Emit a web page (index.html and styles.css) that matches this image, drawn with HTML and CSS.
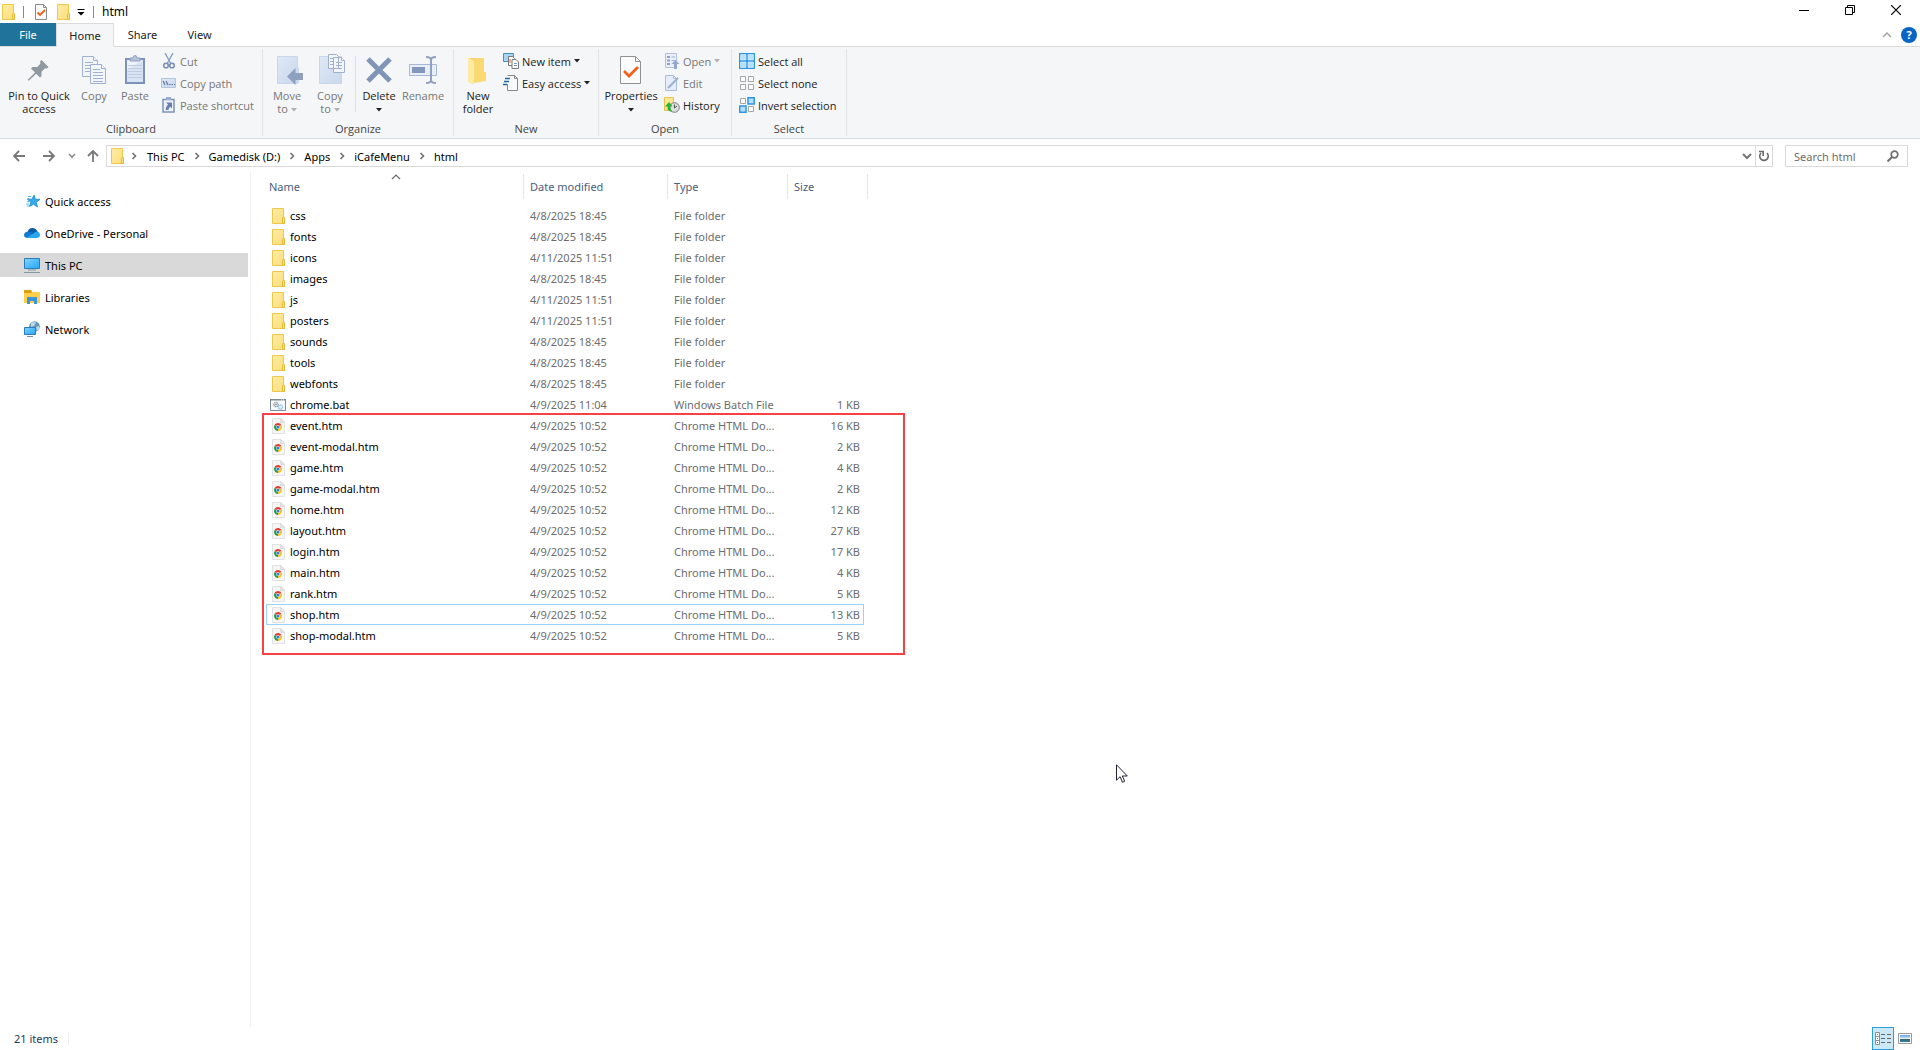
FILE: index.html
```html
<!DOCTYPE html>
<html lang="en">
<head>
<meta charset="utf-8">
<meta name="viewport" content="width=device-width, initial-scale=1">
<title>html</title>
<link rel="stylesheet" href="styles.css">
</head>
<body>
<svg class="sprite" aria-hidden="true">
  <defs>
    <linearGradient id="fold" x1="0" y1="0" x2="1" y2="1"><stop offset="0" stop-color="#ffeda6"/><stop offset="1" stop-color="#fbdc78"/></linearGradient>
    <linearGradient id="screen" x1="0" y1="0" x2="1" y2="1"><stop offset="0" stop-color="#8ad2ff"/><stop offset=".5" stop-color="#4fbcfd"/><stop offset="1" stop-color="#2aa5f4"/></linearGradient>
    <linearGradient id="pale" x1="0" y1="0" x2="1" y2="1"><stop offset="0" stop-color="#dfe8f6"/><stop offset="1" stop-color="#c9d8ec"/></linearGradient>
    <linearGradient id="sky" x1="0" y1="0" x2="0" y2="1"><stop offset="0" stop-color="#5b9cf8"/><stop offset=".5" stop-color="#dcebf5"/><stop offset=".6" stop-color="#3d6b58"/><stop offset="1" stop-color="#2f7ab8"/></linearGradient>
    <symbol id="folder" viewBox="0 0 16 16"><path d="M1.500.5h11v9h1v6h-12z" fill="url(#fold)" stroke="#eec849"/><path d="M11.500 15V10.500q0-1 1-1t1 1V15.500h-2z" fill="#fbe08a" stroke="#e3b93a"/></symbol>
    <symbol id="checkdoc" viewBox="0 0 16 16"><path d="M1.500.5h8l3 3v12h-11z" fill="#fafafa" stroke="#8b8b8b"/><path d="M9.500.5v3h3" fill="none" stroke="#8b8b8b"/><path d="M3.500 8.500l2.500 2.500 5-5" fill="none" stroke="#f0601c" stroke-width="1.800"/></symbol>
    <symbol id="chrome" viewBox="0 0 16 16"><path d="M1.500.5h8.500l3.500 3.500v11.500h-12z" fill="#f6f6f6" stroke="#e2e2e2"/><path d="M9.500.5v4h4z" fill="#e4e4e4" stroke="#d4d4d4" stroke-width=".6"/><path d="M7 9L3.540 7A4 4 0 0 1 10.460 7z" fill="#e33b2e"/><path d="M7 9L10.460 7A4 4 0 0 1 7 13z" fill="#fcc31e"/><path d="M7 9L7 13A4 4 0 0 1 3.540 7z" fill="#229a4b"/><circle cx="7" cy="9" r="1.900" fill="#fff"/><circle cx="7" cy="9" r="1.500" fill="#3277e6"/></symbol>
    <symbol id="bat" viewBox="0 0 16 16"><path d="M.5 2.500h15v11H.5z" fill="#f7f9fa" stroke="#7e8a93"/><path d="M0 2h16v1.500H0z" fill="#7e8a93"/><path d="M11 3h1m1 0h1" stroke="#fff"/><circle cx="6" cy="7.500" r="2.200" fill="#dce3e7" stroke="#8d979e" stroke-width="1.300" stroke-dasharray="1 .5"/><circle cx="10.500" cy="10" r="2.200" fill="#d6ecfa" stroke="#8fbbd8" stroke-width="1.200" stroke-dasharray="1 .5"/><circle cx="6" cy="7.500" r=".7" fill="#788"/></symbol>
    <symbol id="next" viewBox="0 0 16 16"><path d="M6.500 5l3 3-3 3" fill="none" stroke="#6d6d6d" stroke-width="1.500"/></symbol>
    <symbol id="caret" viewBox="0 0 6 4"><path d="M0 0h6L3 3.500z" fill="currentColor"/></symbol>
  </defs>
</svg>

<header class="titlebar">
  <svg class="i16"><use href="#folder"/></svg>
  <span class="bar-sep"></span>
  <button class="plain" aria-label="Properties"><svg class="i16"><use href="#checkdoc"/></svg></button>
  <button class="plain quick-new" aria-label="New folder"><svg class="i16"><use href="#folder"/></svg></button>
  <button class="plain customize" aria-label="Customize toolbar"><svg width="8" height="8" viewBox="0 0 8 8"><path d="M.500 1.500h7" stroke="#000"/><path d="M.500 4h7L4 7.500z" fill="#000"/></svg></button>
  <span class="bar-sep"></span>
  <h1 class="title">html</h1>
  <div class="window-controls">
    <button class="plain" aria-label="Minimize"><svg width="10" height="10"><path d="M0 5.500h10" stroke="#000"/></svg></button>
    <button class="plain" aria-label="Restore"><svg width="10" height="10"><path d="M.5 2.500h7v7h-7zM2.500 2V.5h7v7H8" fill="none" stroke="#000"/></svg></button>
    <button class="plain" aria-label="Close"><svg width="10" height="10"><path d="M0 0l10 10M10 0L0 10" stroke="#000" stroke-width="1.200"/></svg></button>
  </div>
</header>

<nav class="tabs">
  <button class="plain tab tab-file">File</button>
  <button class="plain tab tab-active">Home</button>
  <button class="plain tab">Share</button>
  <button class="plain tab">View</button>
  <div class="tab-tools">
    <button class="plain" aria-label="Collapse ribbon"><svg width="10" height="6"><path d="M1 5l4-4 4 4" fill="none" stroke="#a3a3a3" stroke-width="1.400"/></svg></button>
    <button class="plain help" aria-label="Help">?</button>
  </div>
</nav>

<section class="ribbon">
  <div class="group">
    <div class="tools">
      <button class="plain big w72"><svg class="i32" viewBox="0 0 32 32"><g transform="translate(5 6)" fill="#8f999f"><path d="M13.500 0l7 7-1.500 1.500-2-.3-3.500 3.600 0 4.200-1.500 1.500-3.800-3.800L1 20.500 0 20.500 0 19.500l7-7L3 8.500 4.500 7l4.700 0L12.500 3.500 12 1.500z"/></g></svg><span>Pin to Quick<br>access</span></button>
      <button class="plain big off w38"><svg class="i32" viewBox="0 0 32 32"><g fill="#f2f6fb" stroke="#a0b1cf"><path d="M4.500 2.500h11l4 4v16h-15z"/><path d="M15.500 2.500v4h4M7 8.500h8M7 11.500h5M7 14.500h5M7 17.500h5"/><path d="M12.500 10.500h11l4 4v15h-15z"/><path d="M23.500 10.500v4h4M15 15.500h7M15 18.500h10M15 21.500h10M15 24.500h10M15 27.500h10"/></g></svg><span>Copy</span></button>
      <button class="plain big off w44"><svg class="i32" viewBox="0 0 32 32"><path d="M7 5h18v24H7z" fill="#eef3fb" stroke="#7d92bb" stroke-width="2"/><path d="M8 28V16L24 6v22z" fill="#d8e3f4"/><path d="M9 11.500h14M9 14.500h14M9 17.500h14M9 20.500h14M9 23.500h14" stroke="#bfcce2"/><path d="M11 7V4h3q0-2.500 2-2.500T18 4h3v3z" fill="#b7c3d8" stroke="#8da0c2"/></svg><span>Paste</span></button>
      <div class="stack">
        <button class="plain small off"><svg class="i16" viewBox="0 0 16 16"><path d="M4 0l6 11M12 0L6 11" stroke="#8ea3c4" stroke-width="1.500"/><circle cx="5" cy="12.500" r="2.300" fill="none" stroke="#7990b8" stroke-width="1.600"/><circle cx="11" cy="12.500" r="2.300" fill="none" stroke="#7990b8" stroke-width="1.600"/></svg>Cut</button>
        <button class="plain small off"><svg class="i16" viewBox="0 0 16 16"><path d="M.5 3.500h14v9H.5z" fill="url(#pale)" stroke="#b5c5de"/><path d="M2 6l2 4M5 6l2 4M8 9.500h1.500M10.500 9.500H12M13 9.500h1" stroke="#5d759f" stroke-width="1.200"/></svg>Copy path</button>
        <button class="plain small off"><svg class="i16" viewBox="0 0 16 16"><path d="M2 2.500h11v12.500H2z" fill="#eef3fb" stroke="#7d92bb" stroke-width="1.500"/><path d="M5 0h5v3H5z" fill="#9badcb"/><path d="M5 5.500h6v6L9.200 9.700Q7.500 11 7.500 13H4.500Q4.500 10 7 7.500z" fill="#6980ab"/></svg>Paste shortcut</button>
      </div>
    </div>
    <h2 class="group-name">Clipboard</h2>
  </div>

  <div class="group">
    <div class="tools">
      <button class="plain big off w42"><svg class="i32" viewBox="0 0 32 32"><path d="M6.500 2.500h20v27h-20z" fill="url(#pale)" stroke="#c9d7eb"/><path d="M26 18v-6l2 2v15H23" fill="#c9d8ec"/><path d="M16 22.500L24.500 14v5H32v7h-7.500v5z" fill="#8e9fc0"/></svg><span>Move<br>to <svg class="caret"><use href="#caret"/></svg></span></button>
      <button class="plain big off w44"><svg class="i32" viewBox="0 0 32 32"><path d="M5.500 2.500h22v27h-22z" fill="url(#pale)" stroke="#c9d7eb"/><g fill="#f2f6fb" stroke="#a0b1cf"><path d="M14.500.5h8l2 2v12h-10zM19.500 3.500h8l3 3v12h-11z"/><path d="M16 4.500h3M16 7.500h3M16 10.500h3M22 8.500h6M22 11.500h6M22 14.500h6M27.500 3.500v3h3"/></g></svg><span>Copy<br>to <svg class="caret"><use href="#caret"/></svg></span></button>
      <span class="tool-sep"></span>
      <button class="plain big w42"><svg class="i32" viewBox="0 0 32 32"><path d="M5 5l22 22M27 5L5 27" stroke="#8094b8" stroke-width="5"/></svg><span>Delete<br><svg class="caret"><use href="#caret"/></svg></span></button>
      <button class="plain big off w46"><svg class="i32" viewBox="0 0 32 32"><path d="M2.500 10.500h27v11h-27z" fill="#e7eef8" stroke="#a9b9d5"/><path d="M5 13h13v6H5z" fill="#8397bd"/><path d="M19 3q5 0 5 3v20q0 3-5 3M29 3q-5 0-5 3v20q0 3 5 3" fill="none" stroke="#8fa1c2" stroke-width="2"/></svg><span>Rename</span></button>
    </div>
    <h2 class="group-name">Organize</h2>
  </div>

  <div class="group">
    <div class="tools">
      <button class="plain big w42"><svg class="i32" viewBox="0 0 32 32"><path d="M6 4h16v14h2v9H9z" fill="#f9d775"/><path d="M6 4l6 3v24l-6-3z" fill="#ffeaa2"/><path d="M12 29V8l10-4v14h2v9z" fill="#fbd972"/></svg><span>New<br>folder</span></button>
      <div class="stack">
        <button class="plain small"><svg class="i16" viewBox="0 0 16 16"><path d="M.5.5h10v8H.5z" fill="#a7d5f2" stroke="#4a8fb9"/><path d="M5.500 3.500h4l2 2v7h-6z" fill="#fff" stroke="#777"/><path d="M9 6.500h4l2.500 2.500v6.500H9z" fill="#fff" stroke="#777"/><path d="M11 10.500h3M11 12.500h3" stroke="#7993bd"/><path d="M7 6v4" stroke="#cf6c3e"/></svg>New item <svg class="caret"><use href="#caret"/></svg></button>
        <button class="plain small"><svg class="i16" viewBox="0 0 16 16"><path d="M4.500.5h7l3 3v12h-10V9" fill="#fafafa" stroke="#888"/><path d="M11.500.5v3h3" fill="none" stroke="#888"/><path d="M2 3.500h5M1 6.500h5M0 9.500h4" stroke="#1c66a5" stroke-width="1.300"/></svg>Easy access <svg class="caret"><use href="#caret"/></svg></button>
      </div>
    </div>
    <h2 class="group-name">New</h2>
  </div>

  <div class="group">
    <div class="tools">
      <button class="plain big w58"><svg class="i32" viewBox="0 0 32 32"><path d="M5.500 2.500h15l5 5v22h-20z" fill="#fbfbfb" stroke="#929292"/><path d="M20.500 2.500v5h5" fill="none" stroke="#929292"/><path d="M9 17l5 5 9-9" fill="none" stroke="#f4601a" stroke-width="2.800"/></svg><span>Properties<br><svg class="caret"><use href="#caret"/></svg></span></button>
      <div class="stack">
        <button class="plain small off"><svg class="i16" viewBox="0 0 16 16"><path d="M1.500.5h11v14h-11z" fill="#e9f0fa" stroke="#b0c0dc"/><path d="M3 3h3v2H3zM3 6.500h3v2H3zM3 10h3v2H3z" fill="#8ba1c9"/><path d="M7.500 4H11M7.500 7.500H11" stroke="#9fb1d2"/><path d="M11.500 7l4 4h-2.500v5h-3v-5H7.500z" fill="#95a7cb"/></svg>Open <svg class="caret"><use href="#caret"/></svg></button>
        <button class="plain small off"><svg class="i16" viewBox="0 0 16 16"><path d="M1.500.5h8l3 3v12h-11z" fill="#e4edf9" stroke="#aabddb"/><path d="M9.500.5v3h3" fill="none" stroke="#aabddb"/><path d="M4 13L14 3" stroke="#9bb0d3" stroke-width="2"/></svg>Edit</button>
        <button class="plain small"><svg class="i16" viewBox="0 0 16 16"><path d="M.5.5h9v13h-9z" fill="url(#fold)" stroke="#eac34c"/><circle cx="10.500" cy="10.500" r="4.800" fill="#dedede" stroke="#7a7a7a"/><path d="M10.500 11V7.500M10.500 11l2.500-2" stroke="#555"/><path d="M8 15Q3 14 3.500 9.500H1L5 5l3.500 4.500H6.500Q6 12.500 8 15z" fill="#2bb13c"/></svg>History</button>
      </div>
    </div>
    <h2 class="group-name">Open</h2>
  </div>

  <div class="group">
    <div class="tools">
      <div class="stack">
        <button class="plain small"><svg class="i16" viewBox="0 0 16 16"><path d="M0 0h16v16H0z" fill="#2d95e8"/><path d="M1.500 1.500h5.500v5.500H1.500zM9 1.500h5.500v5.500H9zM1.500 9h5.500v5.500H1.500zM9 9h5.500v5.500H9z" fill="#b6e0fc" stroke="#e5f4fe" stroke-width=".6"/></svg>Select all</button>
        <button class="plain small"><svg class="i16" viewBox="0 0 16 16"><path d="M1.500 1.500h5v5h-5zM9.500 1.500h5v5h-5zM1.500 9.500h5v5h-5zM9.500 9.500h5v5h-5z" fill="#fff" stroke="#a5a5a5"/></svg>Select none</button>
        <button class="plain small"><svg class="i16" viewBox="0 0 16 16"><path d="M1.500 1.500h5v5h-5zM9.500 9.500h5v5h-5z" fill="#fff" stroke="#a5a5a5"/><path d="M9 .800h6.200V7H9zM.800 9H7v6.200H.800z" fill="#b6e0fc" stroke="#2d95e8" stroke-width="1.500"/></svg>Invert selection</button>
      </div>
    </div>
    <h2 class="group-name">Select</h2>
  </div>
</section>

<div class="navbar">
  <div class="arrows">
    <button class="plain" aria-label="Back"><svg width="14" height="12"><path d="M13 6H2M7 1L2 6l5 5" fill="none" stroke="#787878" stroke-width="1.800"/></svg></button>
    <button class="plain" aria-label="Forward"><svg width="14" height="12"><path d="M1 6h11M7 1l5 5-5 5" fill="none" stroke="#787878" stroke-width="1.800"/></svg></button>
    <button class="plain recent" aria-label="Recent locations"><svg width="8" height="6"><path d="M1 1l3 3 3-3" fill="none" stroke="#8a8a8a" stroke-width="1.600"/></svg></button>
    <button class="plain" aria-label="Up"><svg width="12" height="14"><path d="M6 13V2M1 7l5-5 5 5" fill="none" stroke="#787878" stroke-width="1.800"/></svg></button>
  </div>
  <div class="address">
    <svg class="i16"><use href="#folder"/></svg>
    <svg class="crumb-sep"><use href="#next"/></svg><a href="#">This PC</a>
    <svg class="crumb-sep"><use href="#next"/></svg><a href="#">Gamedisk (D:)</a>
    <svg class="crumb-sep"><use href="#next"/></svg><a href="#">Apps</a>
    <svg class="crumb-sep"><use href="#next"/></svg><a href="#">iCafeMenu</a>
    <svg class="crumb-sep"><use href="#next"/></svg><a href="#">html</a>
    <button class="plain history" aria-label="Previous locations"><svg width="10" height="8"><path d="M1 2l4 4 4-4" fill="none" stroke="#777" stroke-width="2"/></svg></button>
    <button class="plain refresh" aria-label="Refresh"><svg width="12" height="12" viewBox="0 0 12 12"><path d="M3 3A4.300 4.300 0 1 0 9 3M1 1.500h4.200V6" fill="none" stroke="#6b6b6b" stroke-width="1.600"/></svg></button>
  </div>
  <label class="search">
    <input type="search" placeholder="Search html" aria-label="Search html">
    <svg width="12" height="12"><circle cx="7.500" cy="4.500" r="3.300" fill="none" stroke="#707070" stroke-width="1.700"/><path d="M5 7l-4.500 4.500" stroke="#707070" stroke-width="2"/></svg>
  </label>
</div>

<main class="main">
  <nav class="tree">
    <a href="#"><svg class="i16" viewBox="0 0 16 16"><path d="M10 2l1.300 4.200 4.700.2-3.800 2.800L13.500 14 9.500 11.300 5.500 13.500 6.800 9.300 3.500 6.400l4.500-.2z" fill="#35a9ee" stroke="#1b86cb" stroke-width=".8"/><path d="M4 3.500h3M3.500 5.500h2M3 8.500h2M2 11h3M3 13h2" stroke="#5bb5ea"/></svg>Quick access</a>
    <a href="#"><svg class="i16" viewBox="0 0 16 16"><path d="M3.500 8Q4 3 8.500 3q3.500 0 5 3.500L8 11z" fill="#0a5cab"/><path d="M4 13Q0 13 0 10t4-3.500q3 0 6 3z" fill="#1379d0"/><path d="M3 12.500L10 8q1.500-2 3.500-1.500 2.500.8 2.500 3.500 0 3-3.500 3H4z" fill="#28a6ee"/></svg>OneDrive - Personal</a>
    <a href="#" class="current"><svg class="i16" viewBox="0 0 16 16"><path d="M.5 1.500h15v10H.5z" fill="url(#screen)" stroke="#2a7db5"/><path d="M4 13h8M0 15.500h16" stroke="#7f99ab"/></svg>This PC</a>
    <a href="#"><svg class="i16" viewBox="0 0 16 16"><path d="M0 1h7l1 2h8v11H0z" fill="#ffcf4b"/><path d="M0 1h7l1 2-1 1H0z" fill="#e09c12"/><path d="M3 15V9q0-1 1-1h8q1 0 1 1v6h-3v-3H6v3z" fill="#3a94de"/></svg>Libraries</a>
    <a href="#"><svg class="i16" viewBox="0 0 16 16"><circle cx="10.500" cy="5.500" r="5.300" fill="#6396b8"/><path d="M7 2q3-2 5 0l-2 3-3 1zM12 6l3-1v3l-2 2z" fill="#b9d8ea"/><path d="M.5 6.500h11v7H.5z" fill="url(#screen)" stroke="#2a7db5"/><path d="M3 15.500h6" stroke="#6f8fa5"/></svg>Network</a>
  </nav>

  <section class="files">
    <table>
      <colgroup><col class="c-name"><col class="c-date"><col class="c-type"><col class="c-size"></colgroup>
      <thead><tr>
        <th><span class="sorted">Name<svg width="10" height="6"><path d="M1 5l4-4 4 4" fill="none" stroke="#6a6a6a" stroke-width="1.200"/></svg></span></th>
        <th><span>Date modified</span></th><th><span>Type</span></th><th><span class="last">Size</span></th>
      </tr></thead>
      <tbody>
        <tr><td><svg class="i16"><use href="#folder"/></svg>css</td><td>4/8/2025 18:45</td><td>File folder</td><td></td></tr>
        <tr><td><svg class="i16"><use href="#folder"/></svg>fonts</td><td>4/8/2025 18:45</td><td>File folder</td><td></td></tr>
        <tr><td><svg class="i16"><use href="#folder"/></svg>icons</td><td>4/11/2025 11:51</td><td>File folder</td><td></td></tr>
        <tr><td><svg class="i16"><use href="#folder"/></svg>images</td><td>4/8/2025 18:45</td><td>File folder</td><td></td></tr>
        <tr><td><svg class="i16"><use href="#folder"/></svg>js</td><td>4/11/2025 11:51</td><td>File folder</td><td></td></tr>
        <tr><td><svg class="i16"><use href="#folder"/></svg>posters</td><td>4/11/2025 11:51</td><td>File folder</td><td></td></tr>
        <tr><td><svg class="i16"><use href="#folder"/></svg>sounds</td><td>4/8/2025 18:45</td><td>File folder</td><td></td></tr>
        <tr><td><svg class="i16"><use href="#folder"/></svg>tools</td><td>4/8/2025 18:45</td><td>File folder</td><td></td></tr>
        <tr><td><svg class="i16"><use href="#folder"/></svg>webfonts</td><td>4/8/2025 18:45</td><td>File folder</td><td></td></tr>
        <tr><td class="wide-icon"><svg class="i16"><use href="#bat"/></svg>chrome.bat</td><td>4/9/2025 11:04</td><td>Windows Batch File</td><td>1 KB</td></tr>
        <tr><td><svg class="i16"><use href="#chrome"/></svg>event.htm</td><td>4/9/2025 10:52</td><td>Chrome HTML Do...</td><td>16 KB</td></tr>
        <tr><td><svg class="i16"><use href="#chrome"/></svg>event-modal.htm</td><td>4/9/2025 10:52</td><td>Chrome HTML Do...</td><td>2 KB</td></tr>
        <tr><td><svg class="i16"><use href="#chrome"/></svg>game.htm</td><td>4/9/2025 10:52</td><td>Chrome HTML Do...</td><td>4 KB</td></tr>
        <tr><td><svg class="i16"><use href="#chrome"/></svg>game-modal.htm</td><td>4/9/2025 10:52</td><td>Chrome HTML Do...</td><td>2 KB</td></tr>
        <tr><td><svg class="i16"><use href="#chrome"/></svg>home.htm</td><td>4/9/2025 10:52</td><td>Chrome HTML Do...</td><td>12 KB</td></tr>
        <tr><td><svg class="i16"><use href="#chrome"/></svg>layout.htm</td><td>4/9/2025 10:52</td><td>Chrome HTML Do...</td><td>27 KB</td></tr>
        <tr><td><svg class="i16"><use href="#chrome"/></svg>login.htm</td><td>4/9/2025 10:52</td><td>Chrome HTML Do...</td><td>17 KB</td></tr>
        <tr><td><svg class="i16"><use href="#chrome"/></svg>main.htm</td><td>4/9/2025 10:52</td><td>Chrome HTML Do...</td><td>4 KB</td></tr>
        <tr><td><svg class="i16"><use href="#chrome"/></svg>rank.htm</td><td>4/9/2025 10:52</td><td>Chrome HTML Do...</td><td>5 KB</td></tr>
        <tr class="focused"><td><svg class="i16"><use href="#chrome"/></svg>shop.htm</td><td>4/9/2025 10:52</td><td>Chrome HTML Do...</td><td>13 KB</td></tr>
        <tr><td><svg class="i16"><use href="#chrome"/></svg>shop-modal.htm</td><td>4/9/2025 10:52</td><td>Chrome HTML Do...</td><td>5 KB</td></tr>
      </tbody>
    </table>
    <div class="highlight"></div>
  </section>
</main>

<footer class="status">
  <span class="count">21 items</span>
  <div class="views">
    <button class="plain view-details" aria-label="Details view"><svg width="16" height="13"><path d="M.5.5h4v12h-4zM.5 4.500h4M.5 8.500h4" fill="#fff" stroke="#8c8c8c"/><path d="M6 2.500h4M12 2.500h4M6 6.500h4M12 6.500h4M6 10.500h4M12 10.500h4" stroke="#666"/><path d="M2 2.500h1" stroke="#2a9a4a"/><path d="M2 6.500h1" stroke="#2a6fd0"/><path d="M2 10.500h1" stroke="#d02a2a"/></svg></button>
    <button class="plain" aria-label="Large icons view"><svg width="14" height="11"><path d="M.5.5h13v10H.5z" fill="#fff" stroke="#999"/><path d="M2 2h10v7H2z" fill="url(#sky)"/></svg></button>
  </div>
</footer>

<svg class="pointer" width="12" height="19" viewBox="0 0 12 19" aria-hidden="true"><path d="M.5.800v15.400l3.600-3.500 2.400 5.600 2.200-1-2.400-5.300h5z" fill="#fff" stroke="#223"/></svg>
</body>
</html>
```
FILE: styles.css
```css
* { box-sizing: border-box; }

body {
  margin: 0;
  min-height: 100vh;
  display: flex;
  flex-direction: column;
  background: #fff;
  color: #000;
  font: 11px/13px "Noto Sans", "Open Sans", sans-serif;
}

.sprite { position: absolute; width: 0; height: 0; }
svg { display: block; flex: none; }
.i16 { width: 16px; height: 16px; }
.i32 { width: 32px; height: 32px; }
h1, h2 { margin: 0; font-size: 11px; font-weight: 400; }
a { color: inherit; text-decoration: none; }

.plain {
  flex: none;
  margin: 0;
  padding: 0;
  border: 0;
  background: none;
  color: inherit;
  font: inherit;
  display: flex;
  align-items: center;
  justify-content: center;
}

/* Title bar */
.titlebar {
  height: 23px;
  padding-left: 1px;
  display: flex;
  align-items: center;
}
.bar-sep { width: 1px; height: 12px; margin: 0 10px 0 6px; background: #8a8a8a; }
.quick-new { margin-left: 6px; }
.customize { margin: 0 8px 0 5px; }
.customize + .bar-sep { margin: 0 8px 0 0; }
.title { font-size: 12px; }
.window-controls { margin: 0 1px 3px auto; display: flex; }
.window-controls .plain { width: 46px; height: 18px; }

/* Tabs */
.tabs {
  height: 24px;
  display: flex;
  border-bottom: 1px solid #dadbdc;
}
.tab { width: 57px; height: 23px; color: #222; }
.tab-file { width: 56px; background: #20739b; color: #fff; }
.tab-active {
  width: 58px;
  height: 24px;
  border: 1px solid #dadbdc;
  border-bottom: 0;
  background: #f5f6f7;
}
.tab-tools { margin-left: auto; padding-right: 3px; display: flex; align-items: center; gap: 9px; }
.help { width: 16px; height: 16px; border-radius: 8px; background: #0a64c4; color: #fff; font-weight: 700; }

/* Ribbon */
.ribbon {
  min-height: 92px;
  padding: 2px 0;
  display: flex;
  background: #f5f6f7;
  border-bottom: 1px solid #dadbdc;
  font-family: "Open Sans", "Noto Sans", sans-serif;
}
.group {
  display: flex;
  flex-direction: column;
  border-right: 1px solid #e2e3e4;
  color: #222;
}
.group:nth-child(1) { width: 263px; }
.group:nth-child(2) { width: 191px; }
.group:nth-child(3) { width: 145px; }
.group:nth-child(4) { width: 133px; }
.group:nth-child(5) { width: 115px; }
.tools { height: 73px; padding-left: 3px; display: flex; }
.group-name { text-align: center; color: #444; line-height: 14px; }
.big { flex-direction: column; justify-content: flex-start; gap: 3px; padding-top: 5px; white-space: nowrap; }
.off { color: #767676; }
.w38 { width: 38px; }
.w42 { width: 42px; }
.w44 { width: 44px; }
.w46 { width: 46px; }
.w58 { width: 58px; }
.w72 { width: 72px; }
.caret { display: inline-block; width: 6px; height: 4px; vertical-align: middle; }
.off .caret { color: #b0b0b0; }
.tool-sep { width: 1px; height: 56px; margin: 7px 2px 0 3px; background: #dfe0e2; }
.stack { padding: 1px 0 0 4px; display: flex; flex-direction: column; align-items: flex-start; }
.small { height: 22px; gap: 3px; white-space: nowrap; }

/* Navigation bar */
.navbar {
  padding: 6px 12px 5px 10px;
  display: flex;
  align-items: center;
}
.arrows { width: 96px; display: flex; }
.arrows .plain { width: 18px; height: 22px; margin-right: 12px; }
.arrows .recent { width: 12px; margin: 0 6px 0 -4px; }
.arrows .plain:last-child { margin-right: 0; }
.address {
  flex: 1;
  height: 22px;
  padding-left: 3px;
  display: flex;
  align-items: center;
  border: 1px solid #d9d9d9;
}
.crumb-sep { width: 16px; height: 16px; margin: 0 4px; }
.address .i16 + .crumb-sep { margin: 0 5px 0 0; }
.history { width: 16px; height: 20px; margin-left: auto; }
.refresh { width: 17px; height: 20px; border-left: 1px solid #d9d9d9; }
.search {
  width: 123px;
  height: 22px;
  margin-left: 12px;
  padding: 0 8px;
  display: flex;
  align-items: center;
  border: 1px solid #d9d9d9;
}
.search input {
  flex: 1;
  min-width: 0;
  padding: 0;
  border: 0;
  outline: 0;
  background: none;
  font: inherit;
}
.search input::placeholder { color: #6d6d6d; }

/* Body */
.main { flex: 1; display: flex; }
.tree {
  width: 251px;
  padding: 17px 2px 0 0;
  display: flex;
  flex-direction: column;
  gap: 8px;
  border-right: 1px solid #f0f0f0;
}
.tree a { height: 24px; padding-left: 24px; display: flex; align-items: center; gap: 5px; }
.tree .current { background: #d9d9d9; }

.files { flex: 1; position: relative; padding-left: 15px; }
table { width: 598px; border-collapse: collapse; table-layout: fixed; }
.c-name { width: 258px; }
.c-date { width: 144px; }
.c-type { width: 120px; }
.c-size { width: 76px; }
th { height: 33px; padding: 2px 0 6px; font-weight: 400; text-align: left; vertical-align: top; color: #4c607a; }
th span { display: block; height: 25px; padding-left: 6px; line-height: 25px; border-right: 1px solid #e5e5e5; }
th .sorted { padding-left: 3px; display: grid; grid-template-columns: 1fr auto 1fr; }
th .last { width: 80px; }
td { height: 21px; padding: 0 0 0 6px; color: #6d6d6d; white-space: nowrap; }
td:first-child { display: flex; align-items: center; gap: 3px; padding-left: 5px; color: #000; }
td.wide-icon:first-child { gap: 4px; padding-left: 4px; }
td:last-child { padding-right: 4px; text-align: right; }
.focused { outline: 1px solid #99d1ff; outline-offset: -1px; }

.highlight {
  position: absolute;
  left: 11px;
  top: 241px;
  width: 643px;
  height: 242px;
  border: 2px solid #f94144;
}

/* Status bar */
.status {
  height: 23px;
  padding: 0 8px 0 14px;
  display: flex;
  align-items: center;
  justify-content: space-between;
  color: #1e395b;
}
.count { padding-right: 10px; border-right: 1px solid #eee; }
.views { display: flex; align-items: center; gap: 4px; }
.view-details { width: 22px; height: 23px; border: 1px solid #2a9fdc; background: #cbe8f7; }

.pointer { position: absolute; left: 1116px; top: 764px; }
```
